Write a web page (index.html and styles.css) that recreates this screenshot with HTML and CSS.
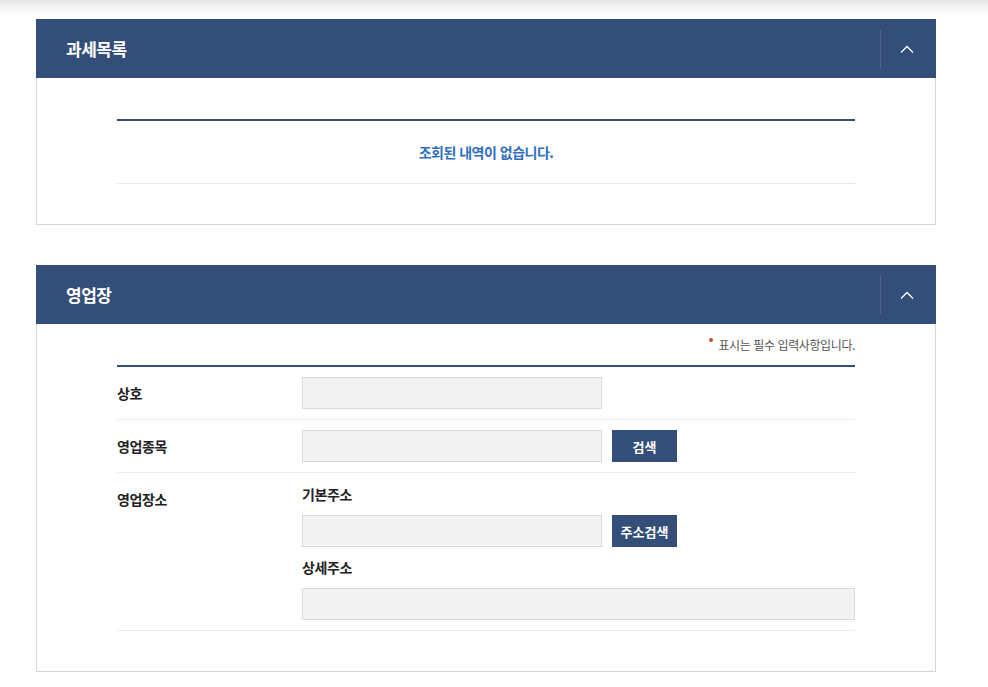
FILE: index.html
```html
<!DOCTYPE html>
<html lang="ko">
<head>
  <meta charset="UTF-8">
  <meta name="viewport" content="width=device-width, initial-scale=1.0">
  <title>영업장 정보</title>
  <link rel="stylesheet" href="styles.css">
</head>
<body>
  <div class="shade"></div>
  <div class="wrap">
    <div class="panel">
      <div class="panel-head">
        <h2>과세목록</h2>
        <button class="toggle" type="button" aria-label="접기">
          <svg width="14" height="8" viewBox="0 0 14 8"><path d="M1 7.5 L7 1.5 L13 7.5" fill="none" stroke="#fff" stroke-width="1.3"/></svg>
        </button>
      </div>
      <div class="panel-body">
        <div class="list">
          <p class="empty">조회된 내역이 없습니다.</p>
        </div>
      </div>
    </div>

    <div class="panel">
      <div class="panel-head">
        <h2>영업장</h2>
        <button class="toggle" type="button" aria-label="접기">
          <svg width="14" height="8" viewBox="0 0 14 8"><path d="M1 7.5 L7 1.5 L13 7.5" fill="none" stroke="#fff" stroke-width="1.3"/></svg>
        </button>
      </div>
      <div class="panel-body form-body">
        <p class="note"><span class="dot"></span>표시는 필수 입력사항입니다.</p>
        <div class="form">
          <div class="row">
            <span class="label">상호</span>
            <div class="field">
              <input type="text" class="input">
            </div>
          </div>
          <div class="row">
            <span class="label">영업종목</span>
            <div class="field">
              <input type="text" class="input">
              <button type="button" class="btn">검색</button>
            </div>
          </div>
          <div class="row">
            <span class="label">영업장소</span>
            <div class="field col">
              <span class="sub-label">기본주소</span>
              <div class="line">
                <input type="text" class="input">
                <button type="button" class="btn">주소검색</button>
              </div>
              <span class="sub-label second">상세주소</span>
              <input type="text" class="input wide">
            </div>
          </div>
        </div>
      </div>
    </div>
  </div>
</body>
</html>
```

FILE: styles.css
```css
body {
  margin: 0;
  font-family: "Noto Sans CJK KR", "Noto Sans", sans-serif;
  background: #fff;
  color: #222;
}
.shade {
  height: 19px;
  background: linear-gradient(#e4e4e4, #f6f6f6 8px, #fff 16px);
}
.wrap {
  width: 900px;
  margin-left: 36px;
}
.panel {
  margin-bottom: 40px;
}
.panel-head {
  display: flex;
  align-items: center;
  height: 59px;
  background: #344e7a;
}
.panel-head h2 {
  flex: 1;
  margin: 0;
  padding-left: 30px;
  font-size: 17px;
  font-weight: 700;
  color: #fff;
  letter-spacing: -0.5px;
}
.toggle {
  width: 56px;
  height: 38px;
  border: none;
  border-left: 1px solid #4c6591;
  background: none;
  padding: 0;
  display: flex;
  align-items: center;
  justify-content: center;
  cursor: pointer;
}
.toggle svg {
  margin-left: -3px;
}
.panel-body {
  border: 1px solid #d4d4d4;
  border-top: none;
  padding: 41px 80px 40px;
}
.list {
  border-top: 2px solid #344e7a;
  border-bottom: 1px solid #e8e8e8;
}
.empty {
  margin: 0;
  padding: 20px 0;
  line-height: 22px;
  text-align: center;
  font-size: 14px;
  font-weight: 700;
  color: #2f6fc0;
  letter-spacing: -0.5px;
}
.form-body {
  padding-top: 11px;
}
.note {
  margin: 0 0 10px;
  text-align: right;
  font-size: 12px;
  line-height: 20px;
  color: #555;
  letter-spacing: -0.4px;
}
.dot {
  display: inline-block;
  width: 4px;
  height: 4px;
  border-radius: 50%;
  background: #c8502a;
  vertical-align: top;
  margin: 3px 5px 0 0;
}
.form {
  border-top: 2px solid #344e7a;
}
.row {
  display: flex;
  align-items: flex-start;
  padding: 10px 0;
  border-bottom: 1px solid #ececec;
}
.label {
  width: 185px;
  flex-shrink: 0;
  line-height: 32px;
  font-size: 14px;
  font-weight: 700;
  letter-spacing: -0.4px;
}
.field {
  flex: 1;
  display: flex;
  align-items: center;
}
.field.col {
  flex-direction: column;
  align-items: stretch;
}
.line {
  display: flex;
  align-items: center;
}
.sub-label {
  font-size: 14px;
  font-weight: 700;
  line-height: 22px;
  margin-bottom: 10px;
  letter-spacing: -0.4px;
}
.sub-label.second {
  margin-top: 9px;
}
.input {
  box-sizing: border-box;
  width: 300px;
  height: 32px;
  margin: 0;
  border: 1px solid #dadada;
  background: #f3f3f3;
  font-family: inherit;
}
.input.wide {
  width: 100%;
}
.btn {
  height: 32px;
  width: 65px;
  margin-left: 10px;
  padding: 0;
  border: none;
  background: #344e7a;
  color: #fff;
  font-family: inherit;
  font-size: 13px;
  font-weight: 700;
  cursor: pointer;
}
```
